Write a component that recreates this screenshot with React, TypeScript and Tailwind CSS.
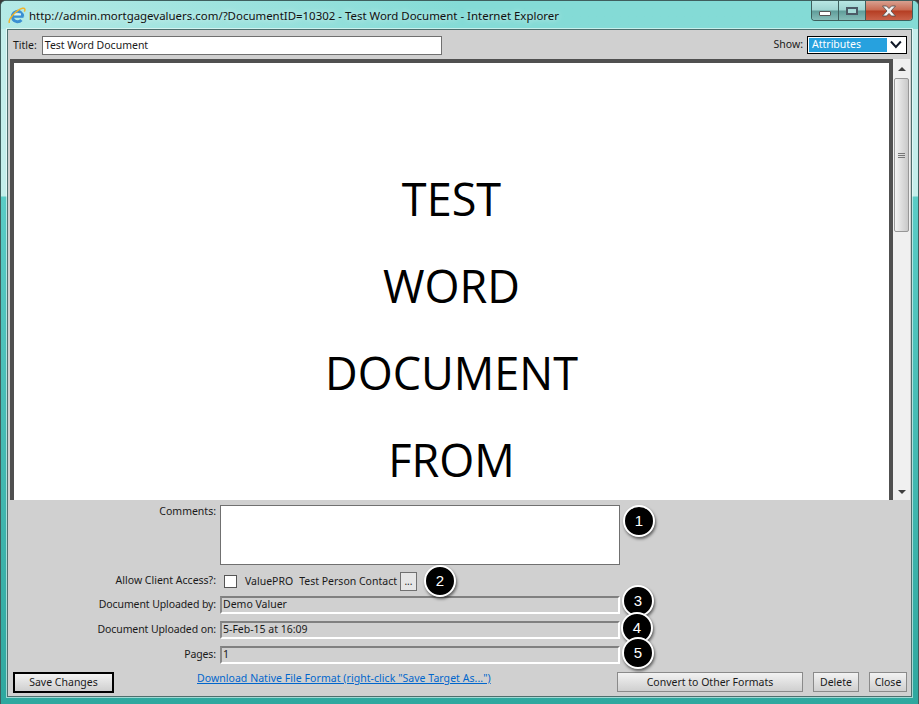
const ui = "font-['Noto_Sans','Open_Sans',sans-serif]";
const btn = 'flex h-[20px] items-center justify-center border border-[#8a8a8a] bg-gradient-to-b from-[#f2f2f2] to-[#cfcfcf] pt-[1px] text-[10.5px] text-[#1a1a1a]';

function IeLogo() {
  return (
    <svg width="18" height="18" viewBox="0 0 18 18" className="shrink-0">
      <path d="M14.7 9.5A5.2 5.2 0 1 0 13.4 13" fill="none" stroke="#3b8fd2" strokeWidth="3" />
      <rect x="4.5" y="8.6" width="11" height="2.2" fill="#3b8fd2" />
      <rect x="6" y="6.4" width="7" height="1.6" fill="#d9eefa" />
      <path d="M1.4 16C-.2 12.500 8 3 14.500 1.300c2.500-.6 3 1.200 1.800 3.400" fill="none" stroke="#f0b429" strokeWidth="1.500" />
    </svg>
  );
}

function Badge({ n, className }: { n: number; className: string }) {
  return (
    <div className={`absolute flex h-[32px] w-[32px] items-center justify-center rounded-full border-2 border-white bg-black text-[15px] text-white shadow-[1px_2px_3px_rgba(0,0,0,0.55)] font-['Liberation_Sans',sans-serif] ${className}`}>
      {n}
    </div>
  );
}

function FieldRow({ label, value }: { label: string; value: string }) {
  return (
    <div className="flex h-[25px] items-center">
      <div className="w-[216px] text-right text-[10.5px] tracking-[-0.1px] text-[#1a1a1a]">{label}</div>
      <div className="ml-[4px] flex h-[18px] w-[400px] items-center border-2 border-b-white border-l-[#8a8a8a] border-r-white border-t-[#808080] pl-[1px] pt-[1px] text-[10.5px] text-[#1a1a1a]">
        {value}
      </div>
    </div>
  );
}

export default function App() {
  return (
    <div className="h-[704px] w-[919px] bg-[#3a3a3a]">
      <div className={`relative flex h-[704px] w-[919px] flex-col overflow-hidden rounded-t-[6px] border border-b-0 border-[#3f5f5e] bg-[linear-gradient(to_bottom,#c4eeeb_0px,#c4eeeb_195px,#5accc6_196px,#2fa89f_100%)] px-[6px] pb-[7px] ${ui}`}>
        <div className="-mx-[6px] flex h-[28px] shrink-0 items-center bg-gradient-to-r from-[#b4eae6] via-[#84dbd6] to-[#84dbd6] pl-[7px] pt-[1px]">
          <IeLogo />
          <span className="ml-[3px] text-[11.45px] text-[#111] [text-shadow:0_0_6px_rgba(255,255,255,0.8)]">
            http://admin.mortgagevaluers.com/?DocumentID=10302 - Test Word Document - Internet Explorer
          </span>
        </div>

        <div className="absolute right-[5px] top-0 flex h-[20px] w-[102px] overflow-hidden rounded-b-[4px] border border-t-0 border-[#3d5f5d]">
          <div className="flex w-[27px] items-end justify-center border-r border-[#3d5f5d] bg-[linear-gradient(to_bottom,#b8e6e3_0%,#9fd4d1_48%,#5f9c99_52%,#86bdb9_100%)] pb-[4px]">
            <div className="h-[5px] w-[12px] rounded-[1px] border border-[#555] bg-white" />
          </div>
          <div className="flex w-[27px] items-center justify-center border-r border-[#3d5f5d] bg-[linear-gradient(to_bottom,#b8e6e3_0%,#9fd4d1_48%,#5f9c99_52%,#86bdb9_100%)]">
            <div className="h-[8px] w-[12px] border-2 border-[#4c5a66] bg-[#a8dcd8]" />
          </div>
          <div className="flex flex-1 items-center justify-center bg-[linear-gradient(to_bottom,#d8a090_0%,#c86a52_48%,#b53d22_52%,#c9624a_100%)]">
            <svg width="16" height="12" viewBox="0 0 16 12">
              <path d="M1.500 1h4L8 3.600 10.500 1h4L10 6l4.500 5h-4L8 8.400 5.500 11h-4L6 6z" fill="#f4f4f4" stroke="#4a4a4a" strokeWidth="0.8" />
            </svg>
          </div>
        </div>

        <div className="relative flex min-h-0 flex-1 flex-col border border-[#4d6f6e] bg-[#d0d0d0] shadow-[0_0_0_1px_rgba(255,255,255,0.55)]">
          <div className="flex h-[29px] shrink-0 items-center pl-[5px] pr-[2px]">
            <span className="mt-[3px] text-[10.5px] text-[#1a1a1a]">Title:</span>
            <div className="ml-[5px] mt-[2px] flex h-[19px] w-[400px] items-center border border-[#707070] bg-white pl-[2px] pt-[1px] text-[10.5px] text-[#1a1a1a]">
              Test Word Document
            </div>
            <span className="ml-auto mt-[1px] text-[10.5px] text-[#1a1a1a]">Show:</span>
            <div className="ml-[4px] mr-[2px] flex h-[18px] w-[100px] items-center border border-black bg-white p-[1px]">
              <div className="flex h-full w-[79px] items-center bg-[#27a1de] pl-[3px] text-[10.5px] text-white">Attributes</div>
              <svg width="18" height="12" viewBox="0 0 18 12" className="ml-auto">
                <path d="M4 2.500 9 8l5-5.500" fill="none" stroke="#101828" strokeWidth="2" />
              </svg>
            </div>
          </div>

          <div className="ml-[2px] mr-[1px] flex h-[441px] shrink-0">
            <div className="flex flex-1 flex-col items-center gap-[25px] overflow-hidden border-x-[4px] border-t-[4px] border-[#505050] bg-white pt-[105px] text-[45px] leading-[62px] text-black font-['Open_Sans',sans-serif]">
              <div>TEST</div>
              <div>WORD</div>
              <div>DOCUMENT</div>
              <div>FROM</div>
            </div>
            <div className="flex w-[17px] flex-col items-center bg-[#f0f0f0]">
              <div className="flex h-[19px] w-full items-center justify-center">
                <div className="h-0 w-0 border-x-[4px] border-b-[4px] border-x-transparent border-b-[#404040]" />
              </div>
              <div className="flex h-[154px] w-[15px] flex-col items-center justify-center gap-[1px] rounded-[2px] border border-[#979797] bg-gradient-to-r from-[#f2f2f2] to-[#c9c9c9]">
                <div className="h-[1px] w-[7px] bg-[#777]" />
                <div className="h-[1px] w-[7px] bg-[#777]" />
                <div className="h-[1px] w-[7px] bg-[#777]" />
              </div>
              <div className="flex-1" />
              <div className="flex h-[17px] w-full items-center justify-center">
                <div className="h-0 w-0 border-x-[4px] border-t-[4px] border-x-transparent border-t-[#404040]" />
              </div>
            </div>
          </div>

          <div className="relative flex min-h-0 flex-1 flex-col pt-[5px]">
            <div className="flex h-[60px] items-start">
              <div className="w-[208px] text-right text-[10.5px] leading-[12px] text-[#1a1a1a]">Comments:</div>
              <div className="ml-[4px] h-[60px] w-[400px] border border-[#707070] bg-white" />
            </div>

            <div className="mt-[4px] flex h-[24px] items-center">
              <div className="-mt-[1px] w-[208px] text-right text-[10.5px] text-[#1a1a1a]">Allow Client Access?:</div>
              <div className="ml-[8px] h-[13px] w-[13px] border border-[#555] bg-white" />
              <span className="ml-[8px] mt-[2px] text-[10.5px] text-[#1a1a1a]">ValuePRO</span>
              <span className="ml-[6px] mt-[2px] text-[10.5px] text-[#1a1a1a]">Test Person Contact</span>
              <div className="ml-[3px] flex h-[19px] w-[17px] items-center justify-center border border-[#707070] bg-[#e6e6e6] text-[10px] text-[#222]">...</div>
            </div>

            <div className="-ml-[8px] -mt-[1px]">
              <FieldRow label="Document Uploaded by:" value="Demo Valuer" />
              <FieldRow label="Document Uploaded on:" value="5-Feb-15 at 16:09" />
              <FieldRow label="Pages:" value="1" />
            </div>

            <div className="mt-[4px] flex h-[22px] items-center pl-[5px] pr-[4px]">
              <div className="flex h-[21px] w-[101px] items-center justify-center border-2 border-black bg-gradient-to-b from-[#f2f2f2] to-[#cfcfcf] pt-[1px] text-[10.5px] text-[#1a1a1a]">
                Save Changes
              </div>
              <a className="ml-[83px] -mt-[6px] text-[10.5px] tracking-[0.05px] text-[#0066cc] underline">Download Native File Format (right-click "Save Target As...")</a>
              <div className={`ml-auto w-[186px] ${btn}`}>Convert to Other Formats</div>
              <div className={`ml-[10px] w-[46px] ${btn}`}>Delete</div>
              <div className={`ml-[10px] w-[38px] ${btn}`}>Close</div>
            </div>

            <Badge n={1} className="left-[615px] top-[5px]" />
            <Badge n={2} className="left-[416px] top-[65px]" />
            <Badge n={3} className="left-[614px] top-[85px]" />
            <Badge n={4} className="left-[613px] top-[112px]" />
            <Badge n={5} className="left-[614px] top-[137px]" />
          </div>
        </div>
      </div>
    </div>
  );
}
